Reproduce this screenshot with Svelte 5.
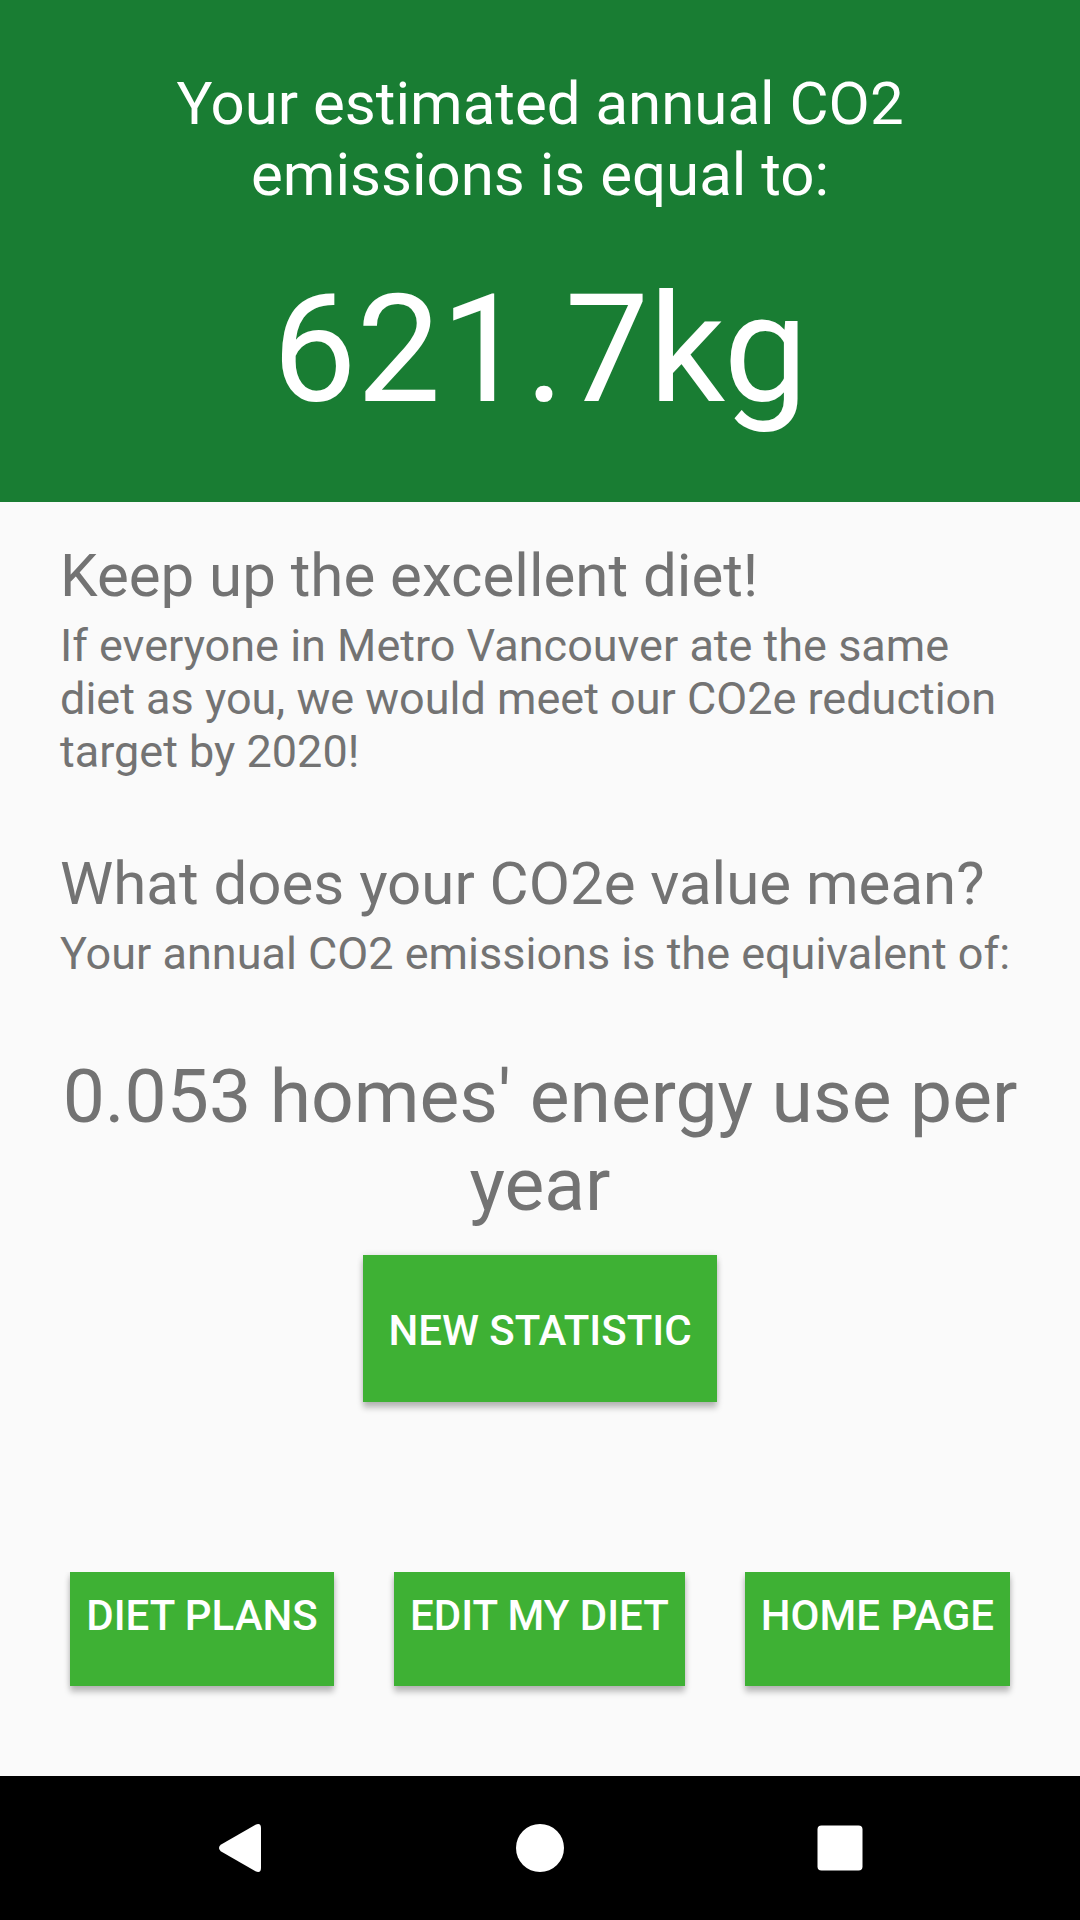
<script>
  const emissions = '621.7kg';
  const stats = ["0.053 homes' energy use per year"];
  let index = $state(0);
  const links = ['DIET PLANS', 'EDIT MY DIET', 'HOME PAGE'];

  function nextStat() {
    index = (index + 1) % stats.length;
  }
</script>

<div class="screen">
  <header class="summary">
    <h1>Your estimated annual CO2 emissions is equal to:</h1>
    <p class="total">{emissions}</p>
  </header>

  <main>
    <section>
      <h2>Keep up the excellent diet!</h2>
      <p>If everyone in Metro Vancouver ate the same diet as you, we would meet our CO2e reduction target by 2020!</p>
    </section>
    <section>
      <h2>What does your CO2e value mean?</h2>
      <p>Your annual CO2 emissions is the equivalent of:</p>
    </section>
    <div class="stat">
      <p class="figure">{stats[index]}</p>
      <button class="raised large" type="button" onclick={nextStat}>NEW STATISTIC</button>
    </div>
    <div class="links">
      {#each links as label}
        <button class="raised" type="button">{label}</button>
      {/each}
    </div>
  </main>

  <nav aria-label="System">
    <button type="button" aria-label="Back">
      <svg viewBox="0 0 48 48"><path d="M4.700 20.800 L39.500 0.700 Q45 -1.500 45 4 V44 Q45 49.500 39.500 47.300 L4.700 27.200 Q1.300 24 4.700 20.800 Z" /></svg>
    </button>
    <button type="button" aria-label="Home">
      <svg viewBox="0 0 48 48"><circle cx="24" cy="24" r="24" /></svg>
    </button>
    <button type="button" aria-label="Recent apps">
      <svg viewBox="0 0 48 48"><rect x="1.500" y="1.500" width="45" height="45" rx="4" /></svg>
    </button>
  </nav>
</div>

<style>
  :global(body) {
    margin: 0;
  }

  .screen {
    display: flex;
    flex-direction: column;
    min-height: 100vh;
    background: #fafafa;
    color: #737373;
    font-family: Roboto, 'Liberation Sans', sans-serif;
  }

  h1,
  h2,
  p {
    margin: 0;
    font-weight: 400;
  }

  h1,
  h2 {
    font-size: 60px;
    line-height: 71px;
  }

  p {
    font-size: 45px;
    line-height: 53px;
  }

  .summary {
    display: flex;
    flex-direction: column;
    gap: 52px;
    padding: 68px 60px 64px;
    background: #197d33;
    color: #fff;
    text-align: center;
  }

  .total {
    font-size: 150px;
    line-height: 176px;
  }

  main {
    flex: 1;
    display: flex;
    flex-direction: column;
    gap: 70px;
    padding: 38px 60px 90px;
  }

  section {
    display: flex;
    flex-direction: column;
    gap: 8px;
  }

  .stat {
    display: flex;
    flex-direction: column;
    align-items: center;
    gap: 27px;
    padding-top: 2px;
  }

  .figure {
    font-size: 75px;
    line-height: 88px;
    text-align: center;
  }

  button {
    margin: 0;
    border: 0;
    font-family: inherit;
    cursor: pointer;
  }

  .raised {
    min-width: 264px;
    padding: 19px 16px 46px;
    background: #3eb134;
    color: #fff;
    font-size: 42px;
    font-weight: 500;
    line-height: 49px;
    white-space: nowrap;
    box-shadow:
      0 6px 6px rgba(0, 0, 0, 0.24),
      0 0 6px rgba(0, 0, 0, 0.12);
  }

  .large {
    padding: 51px 25px 47px;
  }

  .links {
    display: flex;
    justify-content: center;
    gap: 60px;
    margin-top: auto;
  }

  .links .raised {
    clip-path: inset(0 -16px -16px -16px);
  }

  nav {
    display: flex;
    justify-content: center;
    gap: 60px;
    background: #000;
  }

  nav button {
    display: flex;
    justify-content: center;
    width: 240px;
    padding: 48px 0;
    background: none;
  }

  svg {
    width: 48px;
    height: 48px;
    fill: #fff;
  }
</style>
